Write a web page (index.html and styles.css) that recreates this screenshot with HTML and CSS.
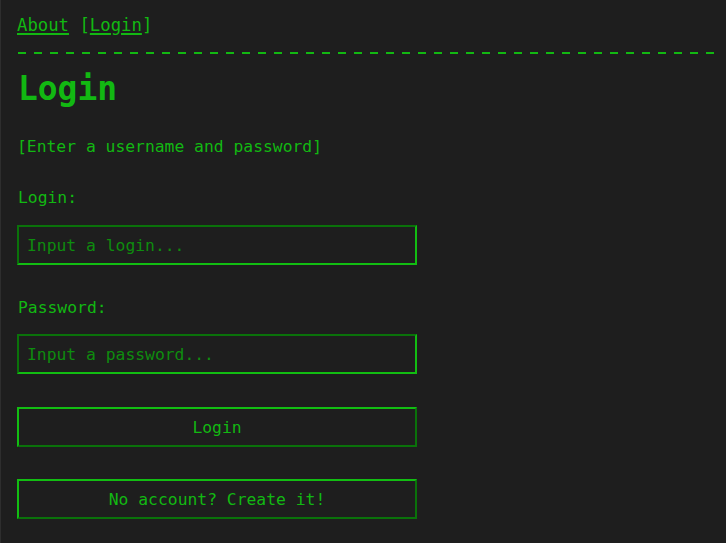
FILE: index.html
```html
<!DOCTYPE html>
<html>
<head>
<meta charset="utf-8">
<title>Login</title>
<link rel="stylesheet" href="styles.css">
</head>
<body>
<div class="page">
  <nav class="nav"><a href="#">About</a> [<a href="#">Login</a>]</nav>
  <div class="sep"></div>
  <h1 class="title">Login</h1>
  <p class="hint">[Enter a username and password]</p>
  <form class="form">
    <label class="label label-login" for="login">Login:</label>
    <input class="field" id="login" type="text" placeholder="Input a login...">
    <label class="label label-pass" for="pass">Password:</label>
    <input class="field" id="pass" type="password" placeholder="Input a password...">
    <button class="btn btn-login" type="button">Login</button>
    <button class="btn btn-create" type="button">No account? Create it!</button>
  </form>
</div>
</body>
</html>
```
FILE: styles.css
```css
html, body {
  margin: 0;
  padding: 0;
  background: #1e1e1e;
}
body {
  border-left: 1px solid #2e2e2e;
  min-height: 543px;
  box-sizing: border-box;
  font-family: "DejaVu Sans Mono", "Liberation Mono", monospace;
  color: #12b812;
}
.page {
  padding: 0 16px;
  display: flex;
  flex-direction: column;
  align-items: flex-start;
}
.nav {
  margin-top: 15px;
  font-size: 17.3px;
  line-height: 20px;
  color: #12b812;
}
.nav a {
  color: #12b812;
  text-decoration: underline;
  text-decoration-thickness: 2px;
  text-underline-offset: 2px;
}
.sep {
  margin-top: 17px;
  margin-left: 1px;
  width: 696px;
  height: 2px;
  background: repeating-linear-gradient(to right, #12b812 0 8px, transparent 8px 16px);
}
.title {
  margin: 15px 0 0 1px;
  font-size: 32.9px;
  line-height: 40px;
  font-weight: bold;
}
.hint {
  margin: 28px 0 0 0;
  font-size: 16.35px;
  line-height: 20px;
}
.form {
  display: flex;
  flex-direction: column;
  align-items: flex-start;
}
.label {
  font-size: 16.35px;
  line-height: 20px;
  margin-left: 1px;
}
.label-login {
  margin-top: 31px;
}
.label-pass {
  margin-top: 33px;
}
.field {
  box-sizing: border-box;
  width: 400px;
  height: 40px;
  margin: 16px 0 0 0;
  padding: 0 8px;
  background: #1e1e1e;
  border: 2px solid;
  border-color: #0a720a #12bd12 #12bd12 #0a720a;
  font-family: "DejaVu Sans Mono", "Liberation Mono", monospace;
  font-size: 16.35px;
  color: #12b812;
  outline: none;
}
#login {
  margin-top: 17px;
}
.field::placeholder {
  color: #0e8c0e;
  opacity: 1;
}
.btn {
  box-sizing: border-box;
  width: 400px;
  height: 40px;
  padding: 0;
  background: #1e1e1e;
  border: 2px solid;
  border-color: #12bd12 #0a720a #0a720a #12bd12;
  font-family: "DejaVu Sans Mono", "Liberation Mono", monospace;
  font-size: 16.35px;
  color: #12b812;
  cursor: pointer;
}
.btn-login {
  margin-top: 33px;
}
.btn-create {
  margin-top: 32px;
}
```
